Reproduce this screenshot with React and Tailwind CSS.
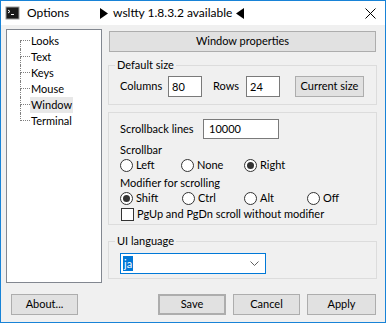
import React from 'react';

const font = "font-['Lato','Noto_Sans',sans-serif]";

const Btn = ({ children, className = '' }) => (
  <div className={`h-[21px] flex items-center justify-center bg-[#e1e1e1] border border-[#adadad] ${className}`}>
    {children}
  </div>
);

const Radio = ({ label, checked, w }) => (
  <div className={`flex items-center h-[16px] ${w}`}>
    <div className="w-[13px] h-[13px] rounded-full border border-[#333] bg-white flex items-center justify-center">
      {checked && <div className="w-[7px] h-[7px] rounded-full bg-[#333]" />}
    </div>
    <span className="ml-[3px]">{label}</span>
  </div>
);

const treeItems = ['Looks', 'Text', 'Keys', 'Mouse', 'Window', 'Terminal'];

export default function App() {
  return (
    <div className={`w-[386px] h-[323px] border border-[#1883d7] bg-[#f0f0f0] flex flex-col overflow-hidden text-[11px] text-black ${font}`}>
      {/* title bar */}
      <div className="h-[24px] bg-white flex items-center shrink-0">
        <svg className="ml-[4px]" width="15" height="14" viewBox="0 0 15 14">
          <rect x="0.5" y="0.5" width="14" height="13" fill="#9a9a9a" />
          <rect x="1.5" y="1.5" width="12" height="11" fill="#1a1a1a" />
          <path d="M3 4 L5 5.5 L3 7" stroke="#fff" strokeWidth="1" fill="none" />
          <path d="M6 8.5 H9" stroke="#fff" strokeWidth="1" />
        </svg>
        <span className="ml-[7px] w-[73px] text-[12px]">Options</span>
        <div className="flex items-center text-[12px]">
          <svg width="8" height="11" viewBox="0 0 8 11"><path d="M0 0 L8 5.5 L0 11 Z" fill="#000" /></svg>
          <span className="ml-[5px]">wsltty 1.8.3.2 available</span>
          <svg className="ml-[4px]" width="8" height="11" viewBox="0 0 8 11"><path d="M8 0 L0 5.5 L8 11 Z" fill="#000" /></svg>
        </div>
        <svg className="ml-auto mr-[9px]" width="11" height="11" viewBox="0 0 11 11">
          <path d="M0.5 0.5 L10.5 10.5 M10.5 0.5 L0.5 10.5" stroke="#000" strokeWidth="1" />
        </svg>
      </div>

      <div className="flex-1 flex flex-col">
        <div className="flex items-start mt-[4px]">
          {/* tree */}
          <div className="ml-[5px] w-[96px] h-[254px] bg-white border border-[#828790] pt-[3px]">
            {treeItems.map((t, i) => (
              <div key={t} className="flex h-[16px]">
                <div className="ml-[13px] w-[10px] flex flex-col">
                  <div className={`h-[8px] border-b border-dotted border-[#808080] ${i > 0 ? 'border-l' : ''}`} />
                  <div className={`h-[8px] border-dotted border-[#808080] ${i < treeItems.length - 1 ? 'border-l' : ''}`} />
                </div>
                <span className={`px-[1px] leading-[16px] ${t === 'Window' ? 'bg-[#e8e8e8]' : ''}`}>{t}</span>
              </div>
            ))}
          </div>

          {/* right panel */}
          <div className="ml-[6px] w-[269px] flex flex-col">
            <Btn className="mx-[1px] mt-[2px] h-[20px]">Window properties</Btn>

            <fieldset className="mt-[6px] border border-[#dcdcdc] px-[11px] pb-[7px]">
              <legend className="ml-[-5px] px-[2px] leading-[14px]">Default size</legend>
              <div className="flex items-center mt-[4px]">
                <span className="w-[48px]">Columns</span>
                <div className="w-[34px] h-[21px] border border-[#7a7a7a] bg-white pl-[3px] leading-[19px]">80</div>
                <span className="ml-[11px] w-[33px]">Rows</span>
                <div className="w-[34px] h-[21px] border border-[#7a7a7a] bg-white pl-[3px] leading-[19px]">24</div>
                <Btn className="ml-[15px] w-[69px]">Current size</Btn>
              </div>
            </fieldset>

            <fieldset className="mt-[7px] border border-[#dcdcdc] px-[11px] pt-[6px] pb-[2px]">
              <div className="flex items-center">
                <span className="w-[83px]">Scrollback lines</span>
                <div className="w-[76px] h-[20px] border border-[#7a7a7a] bg-white pl-[5px] leading-[18px]">10000</div>
              </div>
              <div className="mt-[3px] leading-[15px]">Scrollbar</div>
              <div className="flex">
                <Radio label="Left" w="w-[61px]" />
                <Radio label="None" w="w-[63px]" />
                <Radio label="Right" checked />
              </div>
              <div className="mt-[2px] leading-[15px]">Modifier for scrolling</div>
              <div className="flex">
                <Radio label="Shift" checked w="w-[62px]" />
                <Radio label="Ctrl" w="w-[62px]" />
                <Radio label="Alt" w="w-[63px]" />
                <Radio label="Off" />
              </div>
              <div className="flex items-center h-[16px]">
                <div className="ml-[1px] w-[13px] h-[13px] border border-[#333] bg-white" />
                <span className="ml-[3px]">PgUp and PgDn scroll without modifier</span>
              </div>
            </fieldset>

            <fieldset className="mt-[9px] border border-[#dcdcdc] px-[11px] pb-[4px]">
              <legend className="ml-[-5px] px-[2px] leading-[14px]">UI language</legend>
              <div className="mt-[5px] w-[146px] h-[21px] border border-[#0078d7] bg-white flex items-center pl-[2px] pr-[6px]">
                <span className="bg-[#0078d7] text-white px-[1px] leading-[15px]">ja</span>
                <svg className="ml-auto" width="9" height="5" viewBox="0 0 9 5">
                  <path d="M0.5 0.5 L4.5 4.5 L8.5 0.5" stroke="#606060" strokeWidth="1" fill="none" />
                </svg>
              </div>
            </fieldset>
          </div>
        </div>

        {/* bottom buttons */}
        <div className="flex mt-[11px]">
          <Btn className="ml-[10px] w-[67px]">About...</Btn>
          <Btn className="ml-[80px] w-[68px] border-2 border-[#0078d7]">Save</Btn>
          <Btn className="ml-[7px] w-[67px]">Cancel</Btn>
          <Btn className="ml-[7px] w-[69px]">Apply</Btn>
        </div>
      </div>
    </div>
  );
}
